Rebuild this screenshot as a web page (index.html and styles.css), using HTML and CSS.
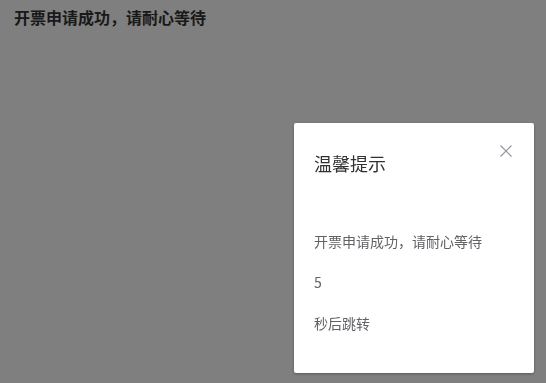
FILE: index.html
```html
<!DOCTYPE html>
<html lang="zh-CN">
<head>
    <meta charset="UTF-8">
    <meta name="viewport" content="width=device-width, initial-scale=1.0">
    <title>开票申请</title>
    <link rel="stylesheet" href="styles.css">
</head>
<body>
    <div class="page">
        <h3 class="notice">开票申请成功，请耐心等待</h3>
    </div>

    <div class="modal-mask"></div>

    <div class="dialog">
        <div class="dialog-header">
            <span class="dialog-title">温馨提示</span>
            <button class="dialog-close" aria-label="关闭">
                <svg width="12" height="12" viewBox="0 0 12 12">
                    <path d="M0.5 0.5 L11.5 11.5 M11.5 0.5 L0.5 11.5" stroke="#909399" stroke-width="1.1" fill="none"/>
                </svg>
            </button>
        </div>
        <div class="dialog-body">
            <p>开票申请成功，请耐心等待</p>
            <p>5</p>
            <p>秒后跳转</p>
        </div>
    </div>
</body>
</html>
```

FILE: styles.css
```css
* {
    margin: 0;
    padding: 0;
    box-sizing: border-box;
}

body {
    font-family: "Noto Sans CJK SC", "Noto Sans", sans-serif;
    background: #fff;
    color: #333;
    min-height: 100vh;
}

.page {
    padding: 6px 14px;
}

.notice {
    font-size: 16px;
    font-weight: bold;
    line-height: 22px;
}

/* dark layer behind the dialog */
.modal-mask {
    position: fixed;
    top: 0;
    left: 0;
    right: 0;
    bottom: 0;
    background: rgba(0, 0, 0, 0.5);
}

.dialog {
    position: fixed;
    top: 123px;
    right: 12px;
    width: 240px;
    height: 250px;
    background: #fff;
    border-radius: 2px;
    box-shadow: 0 1px 3px rgba(0, 0, 0, 0.3);
}

.dialog-header {
    position: relative;
    padding: 28px 20px 10px;
}

.dialog-title {
    font-size: 18px;
    line-height: 24px;
    color: #303133;
}

.dialog-close {
    position: absolute;
    top: 22px;
    right: 22px;
    width: 12px;
    height: 12px;
    border: none;
    background: transparent;
    cursor: pointer;
    display: flex;
}

.dialog-body {
    padding: 28px 20px 0;
    font-size: 14px;
    color: #606266;
}

.dialog-body p {
    margin: 14px 0;
    line-height: 27px;
}
```
